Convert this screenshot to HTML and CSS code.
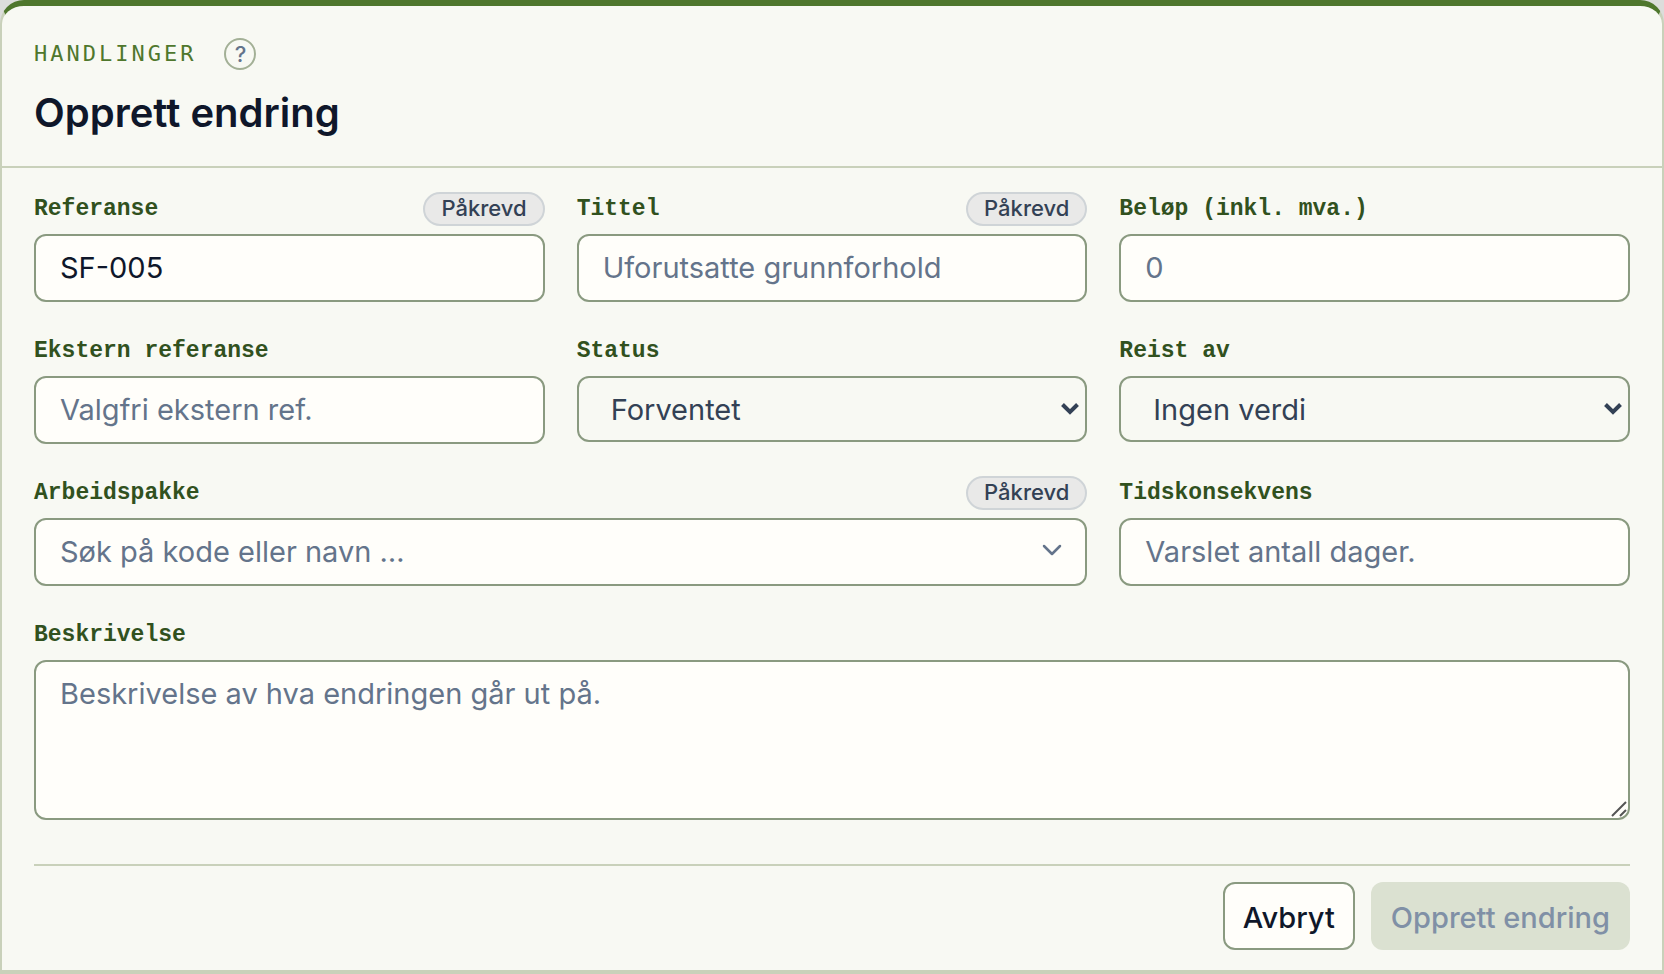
FILE: index.html
```html
<!DOCTYPE html>
<html lang="nb">
<head>
<meta charset="utf-8">
<meta name="viewport" content="width=device-width, initial-scale=1">
<title>Opprett endring</title>
<link rel="stylesheet" href="styles.css">
</head>
<body>
<main class="card">
  <header class="card-header">
    <div class="eyebrow-row">
      <span class="eyebrow">HANDLINGER</span>
      <button class="help" type="button" aria-label="Hjelp">?</button>
    </div>
    <h1 class="title">Opprett endring</h1>
  </header>
  <form class="form">
    <div class="grid">
      <div class="field">
        <div class="label-row"><label for="ref">Referanse</label><span class="badge">Påkrevd</span></div>
        <input class="control" id="ref" type="text" value="SF-005">
      </div>
      <div class="field">
        <div class="label-row"><label for="tittel">Tittel</label><span class="badge">Påkrevd</span></div>
        <input class="control" id="tittel" type="text" placeholder="Uforutsatte grunnforhold">
      </div>
      <div class="field">
        <div class="label-row"><label for="belop">Beløp (inkl. mva.)</label></div>
        <input class="control" id="belop" type="text" inputmode="decimal" placeholder="0">
      </div>
      <div class="field">
        <div class="label-row"><label for="ekstern">Ekstern referanse</label></div>
        <input class="control" id="ekstern" type="text" placeholder="Valgfri ekstern ref.">
      </div>
      <div class="field">
        <div class="label-row"><label for="status">Status</label></div>
        <div class="control-wrap">
          <select class="control select" id="status"><option>Forventet</option></select>
          <svg class="select-arrow" viewBox="0 0 20 14" aria-hidden="true"><path d="M2.5 2.5 10 10 17.5 2.5"/></svg>
        </div>
      </div>
      <div class="field">
        <div class="label-row"><label for="reist">Reist av</label></div>
        <div class="control-wrap">
          <select class="control select" id="reist"><option>Ingen verdi</option></select>
          <svg class="select-arrow" viewBox="0 0 20 14" aria-hidden="true"><path d="M2.5 2.5 10 10 17.5 2.5"/></svg>
        </div>
      </div>
      <div class="field span-two">
        <div class="label-row"><label for="pakke">Arbeidspakke</label><span class="badge">Påkrevd</span></div>
        <div class="control-wrap">
          <input class="control" id="pakke" type="text" role="combobox" aria-expanded="false" placeholder="Søk på kode eller navn …">
          <svg class="combo-arrow" viewBox="0 0 24 24" aria-hidden="true"><path d="M4 8 12 16 20 8"/></svg>
        </div>
      </div>
      <div class="field">
        <div class="label-row"><label for="tid">Tidskonsekvens</label></div>
        <input class="control" id="tid" type="text" placeholder="Varslet antall dager.">
      </div>
      <div class="field span-all">
        <div class="label-row"><label for="beskrivelse">Beskrivelse</label></div>
        <div class="control-wrap">
          <textarea class="control textarea" id="beskrivelse" placeholder="Beskrivelse av hva endringen går ut på."></textarea>
          <svg class="grip" viewBox="0 0 16 16" aria-hidden="true"><path d="M1 15 15 1M9 15 15 9"/></svg>
        </div>
      </div>
    </div>
    <footer class="actions">
      <button class="btn btn-secondary" type="button">Avbryt</button>
      <button class="btn btn-primary" type="submit" disabled>Opprett endring</button>
    </footer>
  </form>
</main>
</body>
</html>
```
FILE: styles.css
```css
*, *::before, *::after { box-sizing: border-box; }

body {
  margin: 0;
  background: #dcdddb;
  color: #0f172a;
  font-family: Inter, "Open Sans", sans-serif;
}

.card {
  background: #f8f9f3;
  border: 2px solid #c9d1ba;
  border-top: 6px solid #4f772d;
  border-bottom-width: 4px;
  border-radius: 24px 24px 0 0;
}

.card-header {
  padding: 32px 32px 26px;
  border-bottom: 2px solid #c9d1ba;
}

.eyebrow-row {
  display: flex;
  align-items: center;
  gap: 28px;
  margin-bottom: 16px;
}

.eyebrow {
  color: #4f772d;
  font-family: "DejaVu Sans Mono", monospace;
  font-size: 22px;
  line-height: 32px;
  letter-spacing: 3px;
}

.help {
  width: 32px;
  height: 32px;
  padding: 0;
  border: 2px solid #a3b096;
  border-radius: 50%;
  background: transparent;
  color: #64748b;
  font: 500 22px/28px Inter, sans-serif;
}

.title {
  margin: 0;
  font-size: 40px;
  font-weight: 600;
  line-height: 54px;
}

.form { padding: 24px 32px 20px; }

.grid {
  display: grid;
  grid-template-columns: repeat(3, minmax(0, 1fr));
  gap: 32px;
}

.field {
  display: flex;
  flex-direction: column;
  gap: 8px;
}

.span-two { grid-column: span 2; }
.span-all { grid-column: 1 / -1; }

.label-row {
  display: flex;
  align-items: center;
  justify-content: space-between;
  height: 34px;
  color: #31511e;
  font: 700 23px/32px "Liberation Mono", monospace;
}

.badge {
  padding: 0 16px 2px;
  border: 2px solid #cfd4d7;
  border-radius: 17px;
  background: #e9e9e8;
  color: #334155;
  font: 500 22px/28px Inter, sans-serif;
}

.control {
  display: block;
  width: 100%;
  height: 68px;
  margin: 0;
  padding: 0 24px 2px;
  border: 2px solid #8a9a80;
  border-radius: 12px;
  background: #fffefa;
  color: #0f172a;
  font: 400 29px/40px Inter, sans-serif;
}

.control::placeholder { color: #64748b; opacity: 1; }

.control-wrap { position: relative; }

.select {
  height: 66px;
  padding: 2px 32px 0;
  background: transparent;
  color: #334155;
  appearance: none;
}

.select-arrow, .combo-arrow, .grip {
  position: absolute;
  fill: none;
  pointer-events: none;
}

.select-arrow {
  top: 26px;
  right: 7px;
  width: 20px;
  height: 14px;
  stroke: #334155;
  stroke-width: 4;
}

.combo-arrow {
  top: 20px;
  right: 23px;
  width: 24px;
  height: 24px;
  stroke: #64748b;
  stroke-width: 2.5;
  stroke-linecap: round;
  stroke-linejoin: round;
}

.textarea {
  height: 160px;
  padding: 12px 24px;
  resize: none;
}

.grip {
  right: 3px;
  bottom: 3px;
  width: 16px;
  height: 16px;
  stroke: #555;
  stroke-width: 2;
}

.actions {
  display: flex;
  justify-content: flex-end;
  gap: 16px;
  margin-top: 44px;
  padding-top: 16px;
  border-top: 2px solid #c9d1ba;
}

.btn {
  height: 68px;
  padding: 4px 18px 0;
  border: 2px solid transparent;
  border-radius: 12px;
  font: 500 29px/40px Inter, sans-serif;
}

.btn-secondary {
  border-color: #8a9a80;
  background: #fffefa;
  color: #0f172a;
}

.btn-primary {
  background: #dbe1d1;
  color: #8090a6;
}
```
